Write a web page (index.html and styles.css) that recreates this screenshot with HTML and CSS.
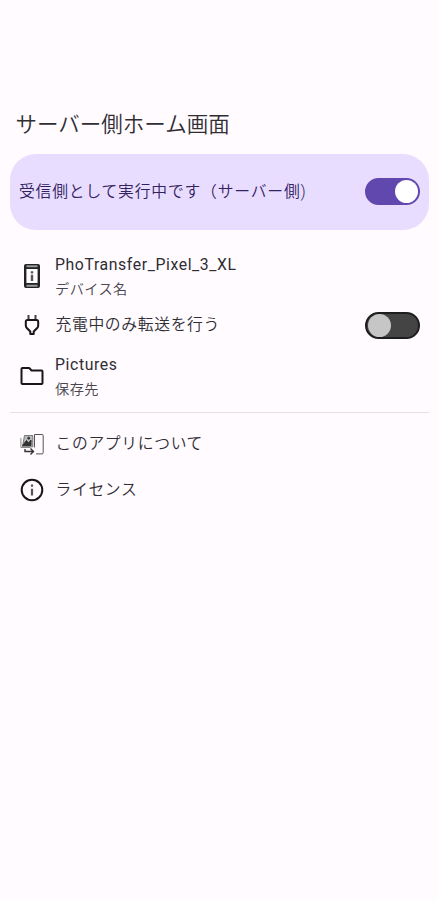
FILE: index.html
```html
<!DOCTYPE html>
<html lang="ja">
<head>
<meta charset="utf-8">
<title>PhoTransfer</title>
<link rel="stylesheet" href="styles.css">
</head>
<body>
<main class="screen">
  <h1 class="title">サーバー側ホーム画面</h1>
  <section class="card">
    <span class="label">受信側として実行中です（サーバー側)</span>
    <span class="switch on"><span class="thumb"></span></span>
  </section>
  <div class="row device">
    <svg class="icon" viewBox="0 0 24 24"><path fill-rule="evenodd" d="M6 0h12a2 2 0 0 1 2 2v20a2 2 0 0 1-2 2H6a2 2 0 0 1-2-2V2a2 2 0 0 1 2-2zm.4 5v14h11.2V5z"/><path d="M6.5 2.3h11M6.5 21.7h11" stroke="#999" stroke-width="2"/><path d="M10.8 7.2h2.4v2.2h-2.4zM10.8 10.8h2.4v6.2h-2.4z" fill="#555"/></svg>
    <div class="text"><span class="label latin">PhoTransfer_Pixel_3_XL</span><span class="sub">デバイス名</span></div>
  </div>
  <div class="row charge">
    <svg class="icon" viewBox="0 0 24 24" fill="none" stroke="#171717" stroke-width="2"><path d="M8.5 2v5M15.5 2v5" stroke="#444"/><path d="M7.5 7h9q1.7 0 1.7 1.7v3.8q0 1.5-1 2.5l-3.5 3.5v2.5h-3.4v-2.5l-3.5-3.5q-1-1-1-2.5V8.7Q5.8 7 7.5 7z" stroke-linejoin="round"/></svg>
    <span class="label">充電中のみ転送を行う</span>
    <span class="switch"><span class="thumb"></span></span>
  </div>
  <div class="row folder">
    <svg class="icon" viewBox="0 0 24 24" fill="none" stroke="#171717" stroke-width="2" stroke-linejoin="round"><path d="M2.5 4h6.7l2.4 2.5h9.9q1 0 1 1V19q0 1-1 1h-19q-1 0-1-1V5q0-1 1-1z"/></svg>
    <div class="text"><span class="label latin">Pictures</span><span class="sub">保存先</span></div>
  </div>
  <hr class="divider">
  <div class="row about">
    <svg class="icon" viewBox="0 0 24 24" fill="none" stroke="#333" stroke-width="1"><path d="M14.5 2.5h7.5a1.2 1.2 0 0 1 1.2 1.2v17a1.2 1.2 0 0 1-1.2 1.2h-6M14.5 2.5v13" stroke="#555"/><path d="M4.5 3.5h8.3v11.3H2.5z" fill="#bbb" stroke="#777"/><path d="M.9 6v9.5h9.5" stroke="#888"/><path d="M2.5 13.5l4-5 2 2.5L11 8v5.5z" fill="#333"/><circle cx="8.7" cy="6.2" r="1" fill="#333"/><path d="M5 17v2.5h8M10.5 16.5l3 3-3 3" stroke-width="1.4"/></svg>
    <span class="label">このアプリについて</span>
  </div>
  <div class="row license">
    <svg class="icon" viewBox="0 0 24 24" fill="none" stroke="#171717" stroke-width="2"><circle cx="12" cy="12" r="10.3"/><path d="M12 6.5v2.2M12 10.8v6.7" stroke="#555" stroke-width="2.2"/></svg>
    <span class="label">ライセンス</span>
  </div>
</main>
</body>
</html>
```
FILE: styles.css
```css
* { box-sizing: border-box; }
body {
  margin: 0;
  background: #fffbff;
  color: #302d33;
  font-family: Roboto, "Noto Sans CJK JP", sans-serif;
}
.screen {
  min-height: 900px;
  padding: 109px 9px 0 9.5px;
}
.title {
  margin: 0 0 12.5px 6px;
  height: 32px;
  line-height: 32px;
  font-size: 21.5px;
  font-weight: 350;
  white-space: nowrap;
}
.card {
  display: flex;
  align-items: center;
  justify-content: space-between;
  height: 76px;
  padding: 0 9px 0 9.5px;
  border-radius: 26px;
  background: #e8ddff;
  color: #33215f;
}
.label {
  font-size: 15.8px;
  line-height: 24px;
  letter-spacing: .65px;
  font-weight: 350;
  white-space: nowrap;
}
.card .label {
  padding-top: 1px;
  letter-spacing: .8px;
}
.latin { letter-spacing: .6px; font-weight: 400; }
.text { display: flex; flex-direction: column; }
.sub {
  font-size: 14.2px;
  line-height: 24px;
  letter-spacing: .45px;
  font-weight: 350;
  color: #49464d;
}
.row {
  display: flex;
  align-items: center;
  padding: 0 9px 0 10.5px;
}
.icon {
  flex: none;
  width: 24px;
  height: 24px;
  margin-right: 11px;
  fill: #222;
}
.charge .icon, .about .icon, .license .icon { margin-right: 11.5px; }
.device .icon, .folder .icon { margin-bottom: 2px; }
svg.icon[fill="none"] { fill: none; }
.switch {
  flex: none;
  width: 55px;
  height: 27.5px;
  margin-left: auto;
  border: 2px solid #1d1d1d;
  border-radius: 14px;
  background: #444;
}
.thumb {
  display: block;
  width: 23px;
  height: 23px;
  margin: .25px 0 0 .5px;
  border-radius: 50%;
  background: #c6c6c6;
}
.switch.on {
  border-color: #6148ae;
  background: #6148ae;
}
.on .thumb {
  margin-left: 27.5px;
  background: #fff;
}
.device { height: 48px; margin-top: 23px; }
.charge { height: 48px; }
.charge .switch { margin-top: 2px; }
.folder { height: 48px; margin-top: 4px; }
.divider {
  height: 1px;
  margin: 11px 0 8px;
  border: 0;
  background: #e4e0e6;
}
.about, .license { height: 46px; }
```
